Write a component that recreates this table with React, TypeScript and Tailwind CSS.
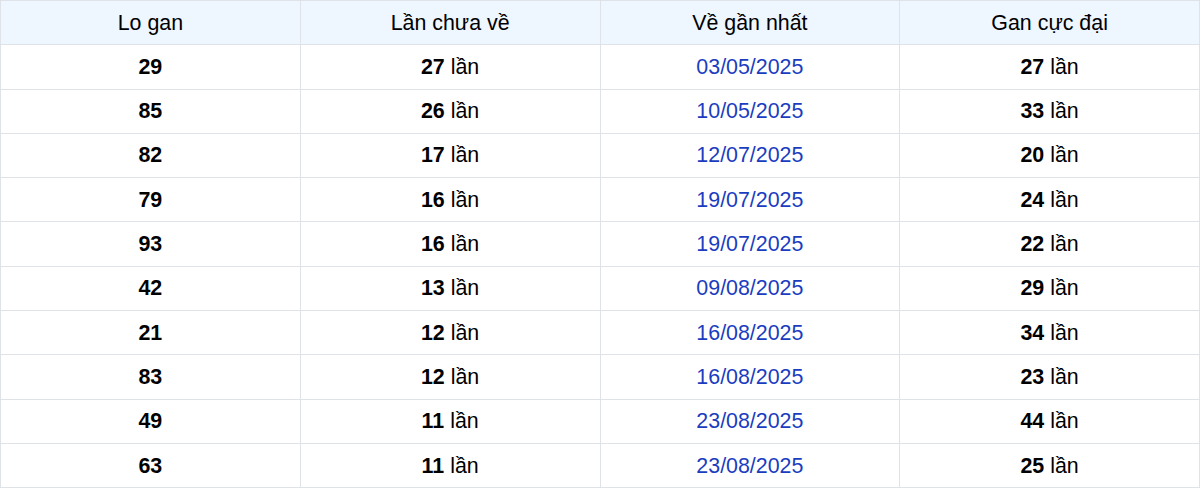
import React from "react";

const rows = [
  { lo: "29", chua: 27, ngay: "03/05/2025", max: 27 },
  { lo: "85", chua: 26, ngay: "10/05/2025", max: 33 },
  { lo: "82", chua: 17, ngay: "12/07/2025", max: 20 },
  { lo: "79", chua: 16, ngay: "19/07/2025", max: 24 },
  { lo: "93", chua: 16, ngay: "19/07/2025", max: 22 },
  { lo: "42", chua: 13, ngay: "09/08/2025", max: 29 },
  { lo: "21", chua: 12, ngay: "16/08/2025", max: 34 },
  { lo: "83", chua: 12, ngay: "16/08/2025", max: 23 },
  { lo: "49", chua: 11, ngay: "23/08/2025", max: 44 },
  { lo: "63", chua: 11, ngay: "23/08/2025", max: 25 },
];

const cell = "border border-[#dfe3e8] text-center align-middle p-0";

export default function App() {
  return (
    <div className="w-[1200px] bg-white" style={{ fontFamily: '"Liberation Sans", Arial, sans-serif' }}>
      <table className="w-full border-collapse table-fixed text-[21.4px] text-black">
        <thead>
          <tr className="h-[44.3px] bg-[#eef6ff]">
            <th className={`${cell} font-normal`}>Lo gan</th>
            <th className={`${cell} font-normal`}>Lần chưa về</th>
            <th className={`${cell} font-normal`}>Về gần nhất</th>
            <th className={`${cell} font-normal`}>Gan cực đại</th>
          </tr>
        </thead>
        <tbody>
          {rows.map((r, i) => (
            <tr key={i} className="h-[44.3px]">
              <td className={`${cell} font-bold`}>{r.lo}</td>
              <td className={cell}>
                <b>{r.chua}</b> lần
              </td>
              <td className={`${cell} text-[#1a3dc0]`}>{r.ngay}</td>
              <td className={cell}>
                <b>{r.max}</b> lần
              </td>
            </tr>
          ))}
        </tbody>
      </table>
    </div>
  );
}
